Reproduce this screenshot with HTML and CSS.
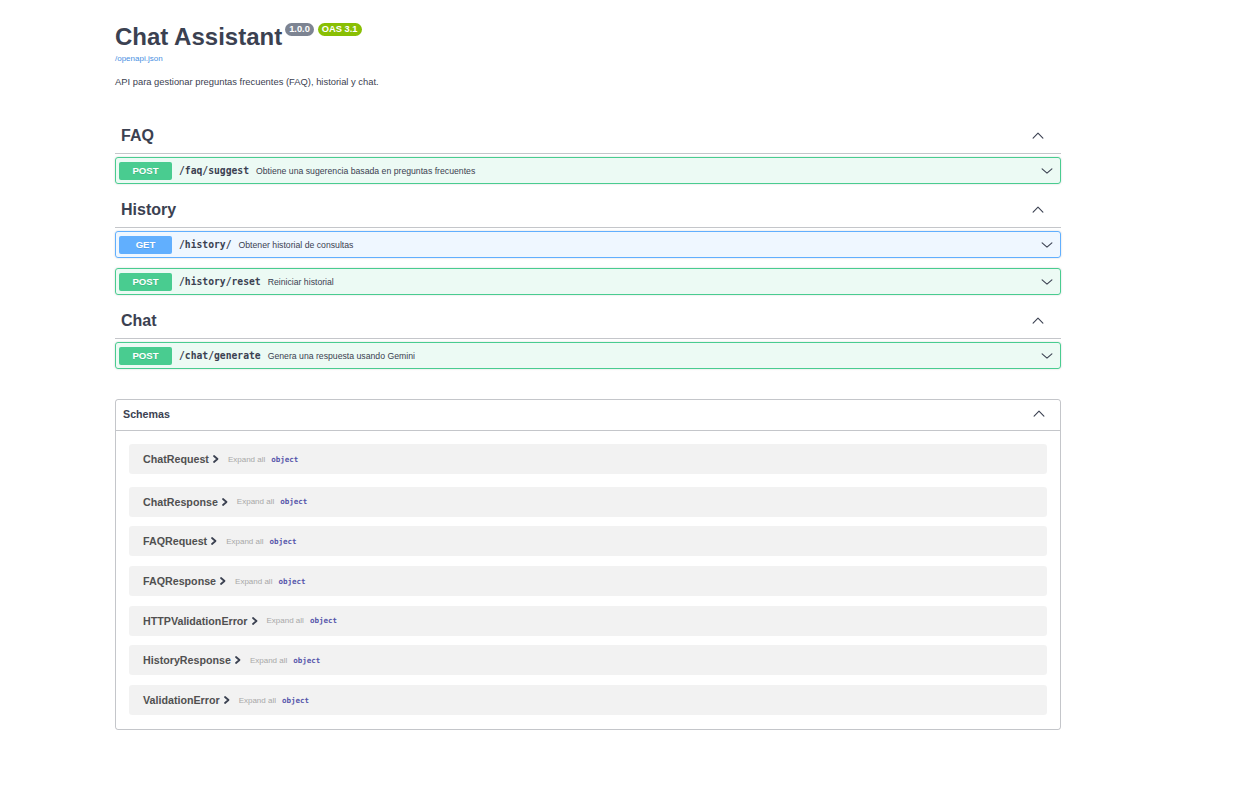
FILE: index.html
```html
<!DOCTYPE html>
<html lang="es">
<head>
<meta charset="utf-8">
<title>Chat Assistant</title>
<link rel="stylesheet" href="styles.css">
</head>
<body>
<div class="wrapper">
  <section class="info">
    <div class="title-row">
      <h2 class="title">Chat Assistant</h2>
      <span class="badge badge-version">1.0.0</span>
      <span class="badge badge-oas">OAS 3.1</span>
    </div>
    <a class="spec-link" href="#">/openapi.json</a>
    <p class="description">API para gestionar preguntas frecuentes (FAQ), historial y chat.</p>
  </section>

  <section class="tag-section">
    <h3 class="tag-header"><span>FAQ</span>
      <svg class="chev chev-tag" viewBox="0 0 20 20"><polyline points="3,13 10,6 17,13"/></svg>
    </h3>
    <div class="opblock opblock-post">
      <span class="method method-post">POST</span>
      <span class="path">/faq/suggest</span>
      <span class="summary">Obtiene una sugerencia basada en preguntas frecuentes</span>
      <svg class="chev chev-op" viewBox="0 0 20 20"><polyline points="3,7 10,13 17,7"/></svg>
    </div>
  </section>

  <section class="tag-section">
    <h3 class="tag-header"><span>History</span>
      <svg class="chev chev-tag" viewBox="0 0 20 20"><polyline points="3,13 10,6 17,13"/></svg>
    </h3>
    <div class="opblock opblock-get">
      <span class="method method-get">GET</span>
      <span class="path">/history/</span>
      <span class="summary">Obtener historial de consultas</span>
      <svg class="chev chev-op" viewBox="0 0 20 20"><polyline points="3,7 10,13 17,7"/></svg>
    </div>
    <div class="opblock opblock-post">
      <span class="method method-post">POST</span>
      <span class="path">/history/reset</span>
      <span class="summary">Reiniciar historial</span>
      <svg class="chev chev-op" viewBox="0 0 20 20"><polyline points="3,7 10,13 17,7"/></svg>
    </div>
  </section>

  <section class="tag-section">
    <h3 class="tag-header"><span>Chat</span>
      <svg class="chev chev-tag" viewBox="0 0 20 20"><polyline points="3,13 10,6 17,13"/></svg>
    </h3>
    <div class="opblock opblock-post">
      <span class="method method-post">POST</span>
      <span class="path">/chat/generate</span>
      <span class="summary">Genera una respuesta usando Gemini</span>
      <svg class="chev chev-op" viewBox="0 0 20 20"><polyline points="3,7 10,13 17,7"/></svg>
    </div>
  </section>

  <section class="models">
    <h4 class="models-header"><span>Schemas</span>
      <svg class="chev chev-models" viewBox="0 0 20 20"><polyline points="3,13 10,6 17,13"/></svg>
    </h4>
    <div class="models-list">
      <div class="model"><span class="model-title">ChatRequest</span><svg class="model-arrow" viewBox="0 0 10 10"><polyline points="3,2 6.5,5 3,8"/></svg><span class="expand">Expand all</span><span class="type">object</span></div>
      <div class="model"><span class="model-title">ChatResponse</span><svg class="model-arrow" viewBox="0 0 10 10"><polyline points="3,2 6.5,5 3,8"/></svg><span class="expand">Expand all</span><span class="type">object</span></div>
      <div class="model"><span class="model-title">FAQRequest</span><svg class="model-arrow" viewBox="0 0 10 10"><polyline points="3,2 6.5,5 3,8"/></svg><span class="expand">Expand all</span><span class="type">object</span></div>
      <div class="model"><span class="model-title">FAQResponse</span><svg class="model-arrow" viewBox="0 0 10 10"><polyline points="3,2 6.5,5 3,8"/></svg><span class="expand">Expand all</span><span class="type">object</span></div>
      <div class="model"><span class="model-title">HTTPValidationError</span><svg class="model-arrow" viewBox="0 0 10 10"><polyline points="3,2 6.5,5 3,8"/></svg><span class="expand">Expand all</span><span class="type">object</span></div>
      <div class="model"><span class="model-title">HistoryResponse</span><svg class="model-arrow" viewBox="0 0 10 10"><polyline points="3,2 6.5,5 3,8"/></svg><span class="expand">Expand all</span><span class="type">object</span></div>
      <div class="model"><span class="model-title">ValidationError</span><svg class="model-arrow" viewBox="0 0 10 10"><polyline points="3,2 6.5,5 3,8"/></svg><span class="expand">Expand all</span><span class="type">object</span></div>
    </div>
  </section>
</div>
</body>
</html>
```

FILE: styles.css
```css
* { box-sizing: border-box; }

html, body {
  margin: 0;
  padding: 0;
  background: #fff;
}

body {
  font-family: "Liberation Sans", Arial, sans-serif;
  color: #3b4151;
}

.wrapper {
  width: 946px;
  margin-left: 115px;
  padding-top: 22px;
  padding-bottom: 40px;
}

/* Info */
.info {
  margin-bottom: 30px;
}

.title-row {
  display: flex;
  align-items: flex-start;
}

.title {
  margin: 0;
  font-size: 24px;
  line-height: 30px;
  font-weight: 700;
  color: #3b4151;
}

.badge {
  display: inline-block;
  margin-top: 1px;
  height: 13px;
  line-height: 13px;
  padding: 0 4px;
  border-radius: 7px;
  font-size: 9.3px;
  font-weight: 700;
  color: #fff;
  font-family: "Liberation Sans", Arial, sans-serif;
}

.badge-version {
  background: #7d8492;
  margin-left: 3px;
}

.badge-oas {
  background: #89bf04;
  margin-left: 4px;
}

.spec-link {
  display: block;
  margin-top: 1px;
  font-size: 8px;
  line-height: 12px;
  color: #4990e2;
  text-decoration: none;
}

.description {
  margin: 10px 0 0;
  font-size: 9.4px;
  line-height: 14px;
  color: #3b4151;
}

/* Tags */
.tag-header {
  display: flex;
  align-items: center;
  justify-content: space-between;
  margin: 0 0 3px;
  padding: 7px 16px 7px 6px;
  height: 35px;
  font-size: 16px;
  line-height: 20px;
  font-weight: 700;
  color: #3b4151;
  border-bottom: 1px solid rgba(59, 65, 81, 0.3);
}

.chev {
  fill: none;
  stroke: #3b4151;
  stroke-width: 1.6;
  stroke-linecap: round;
  stroke-linejoin: round;
}

.chev-tag {
  width: 14px;
  height: 14px;
}

.chev-op {
  width: 14px;
  height: 14px;
  margin-left: auto;
  margin-right: 3px;
}

.chev-models {
  width: 14px;
  height: 14px;
}

/* Operations */
.opblock {
  display: flex;
  align-items: center;
  height: 27px;
  padding: 0 3px;
  margin-bottom: 10px;
  border: 1px solid;
  border-radius: 3px;
  box-shadow: 0 0 2px rgba(0, 0, 0, 0.19);
}

.tag-section .opblock:last-child {
  margin-bottom: 9px;
}

.opblock-post {
  background: rgba(73, 204, 144, 0.1);
  border-color: #49cc90;
}

.opblock-get {
  background: rgba(97, 175, 254, 0.1);
  border-color: #61affe;
}

.method {
  flex: 0 0 53px;
  height: 18px;
  line-height: 18px;
  text-align: center;
  border-radius: 2px;
  font-size: 9.6px;
  font-weight: 700;
  color: #fff;
  text-shadow: 0 1px 0 rgba(0, 0, 0, 0.1);
}

.method-post { background: #49cc90; }
.method-get { background: #61affe; }

.path {
  margin-left: 7px;
  font-family: "DejaVu Sans Mono", "Liberation Mono", monospace;
  font-size: 9.7px;
  font-weight: 700;
  color: #3b4151;
}

.summary {
  margin-left: 7px;
  font-size: 8.7px;
  color: #3b4151;
}

/* Models */
.models {
  margin-top: 30px;
  border: 1px solid rgba(59, 65, 81, 0.3);
  border-radius: 3px;
}

.models-header {
  display: flex;
  align-items: center;
  justify-content: space-between;
  margin: 0;
  height: 31px;
  padding: 0 14px 3px 7px;
  font-size: 10.7px;
  font-weight: 700;
  color: #3b4151;
  border-bottom: 1px solid rgba(59, 65, 81, 0.3);
}

.models-list {
  padding: 13px 13px 14px;
  display: flex;
  flex-direction: column;
  gap: 9.7px;
}

.model {
  display: flex;
  align-items: center;
  height: 30px;
  padding: 0 14px;
  background: rgba(0, 0, 0, 0.05);
  border-radius: 3px;
}

.model:first-child {
  margin-bottom: 3px;
}

.model-title {
  font-size: 10.7px;
  font-weight: 700;
  color: #505050;
}

.model-arrow {
  width: 10px;
  height: 10px;
  margin-left: 2px;
  fill: none;
  stroke: #3b4151;
  stroke-width: 1.8;
  stroke-linecap: round;
  stroke-linejoin: round;
}

.expand {
  margin-left: 7px;
  font-size: 8px;
  color: #a8a8a8;
}

.type {
  margin-left: 6px;
  font-family: "DejaVu Sans Mono", "Liberation Mono", monospace;
  font-size: 7.5px;
  font-weight: 700;
  color: #55a;
}
```
